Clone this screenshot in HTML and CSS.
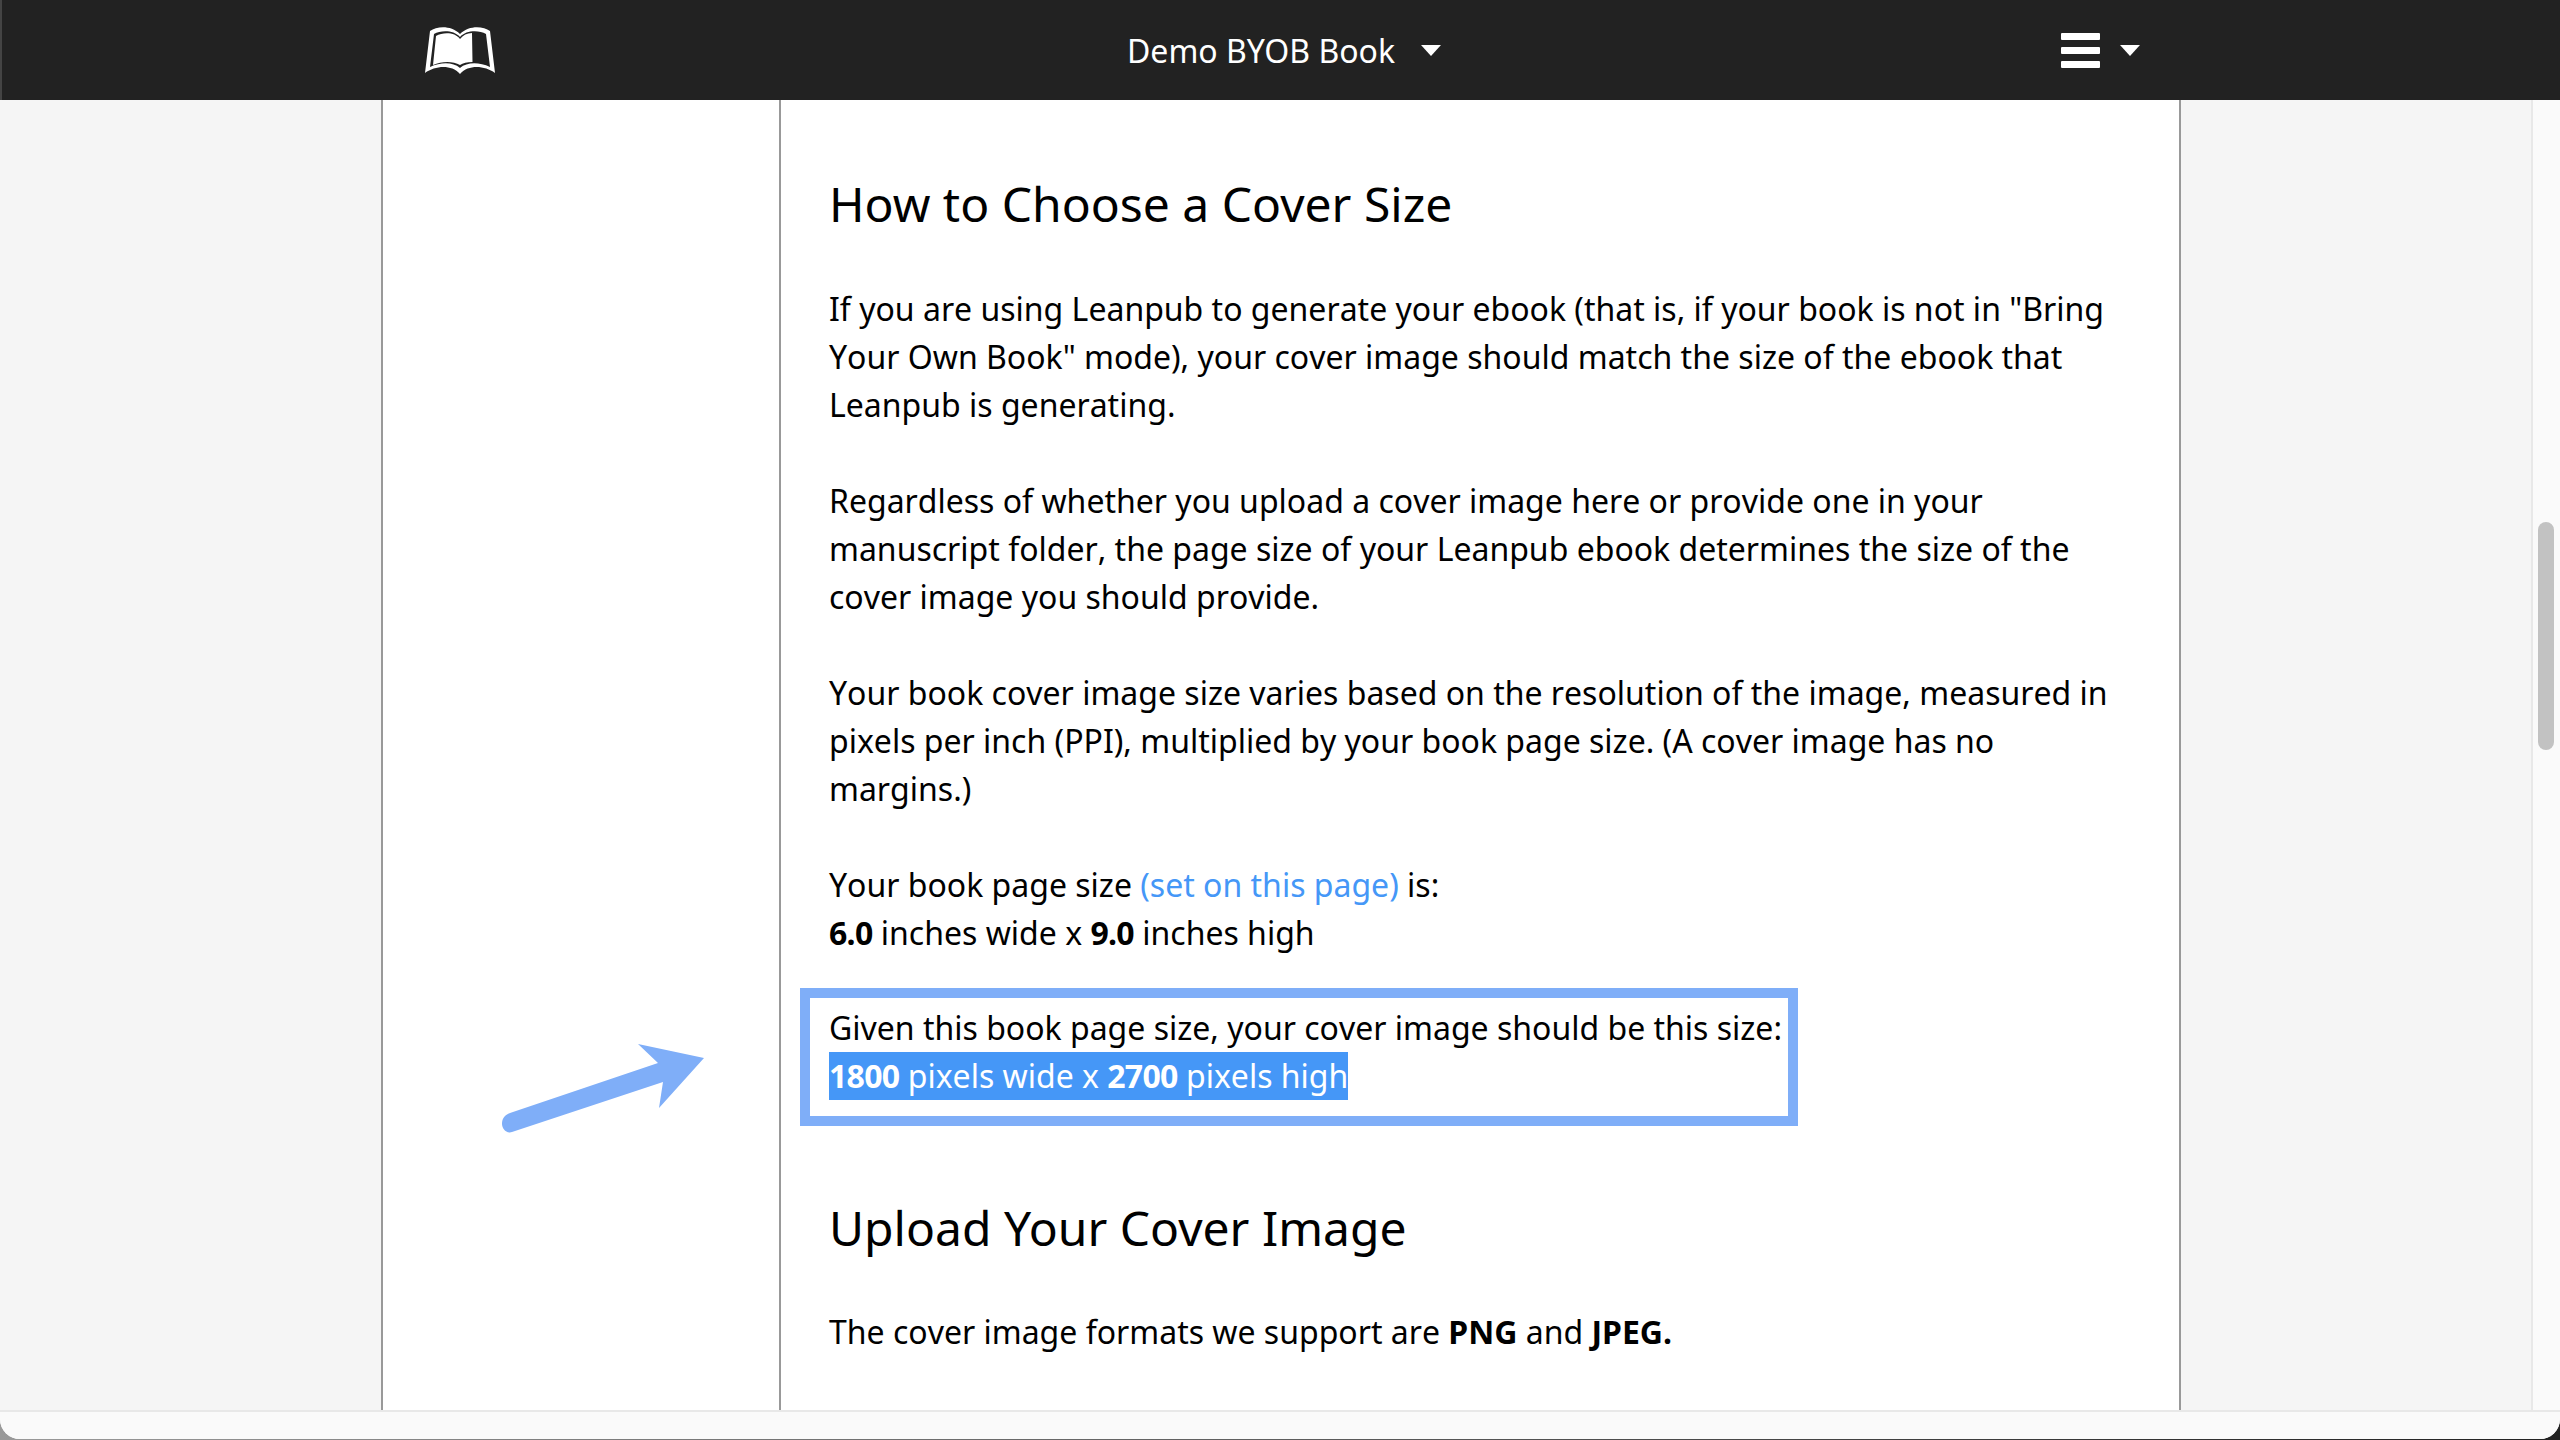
FILE: index.html
```html
<!DOCTYPE html>
<html lang="en">
<head>
  <meta charset="UTF-8">
  <meta name="viewport" content="width=device-width, initial-scale=1.0">
  <title>Book Cover</title>
  <link rel="stylesheet" href="styles.css">
</head>
<body>
  <div class="window">
    <header class="topbar">
      <svg class="book-icon" width="70" height="48" viewBox="0 0 70 48">
        <path fill="#fff" d="M5 5C12 0 26-1 35 8C44-1 58 0 65 5L70 47C60 40 44 38 35 48C26 38 10 40 0 47Z"/>
        <path fill="#222" d="M9 8C16 4 29 4 35 11C41 4 54 4 61 8L65 41C54 36 42 36 35 42C28 36 16 36 5 41Z"/>
        <path fill="#fff" d="M11 10C18 6 30 6 35 13C38 9 42 7 47 7L47.5 36C42 36 38 37 35 39C28 35 17 35 8 39Z"/>
      </svg>
      <div class="book-title">
        <span>Demo BYOB Book</span>
        <span class="caret"></span>
      </div>
      <div class="menu">
        <span class="burger"><i></i><i></i><i></i></span>
        <span class="caret"></span>
      </div>
    </header>

    <div class="body-row">
      <div class="page">
        <div class="gutter-left"></div>
        <div class="sidebar"></div>
        <main class="content">
          <h2>How to Choose a Cover Size</h2>
          <p>If you are using Leanpub to generate your ebook (that is, if your book is not in "Bring Your Own Book" mode), your cover image should match the size of the ebook that Leanpub is generating.</p>
          <p>Regardless of whether you upload a cover image here or provide one in your manuscript folder, the page size of your Leanpub ebook determines the size of the cover image you should provide.</p>
          <p>Your book cover image size varies based on the resolution of the image, measured in pixels per inch (PPI), multiplied by your book page size. (A cover image has no margins.)</p>
          <p>Your book page size <a href="#">(set on this page)</a> is:<br><b class="num">6.0</b> inches wide x <b class="num">9.0</b> inches high</p>
          <div class="callout">
            Given this book page size, your cover image should be this size:<br>
            <span class="selected"><b class="num">1800</b> pixels wide x <b class="num">2700</b> pixels high</span>
          </div>
          <h2 class="second">Upload Your Cover Image</h2>
          <p>The cover image formats we support are <b>PNG</b> and <b>JPEG.</b></p>
        </main>
        <div class="gutter-right"></div>
      </div>
      <div class="scroll-track"><div class="scroll-thumb"></div></div>
      <svg class="arrow" width="210" height="92" viewBox="0 0 210 92">
        <path fill="#7faef8" d="M136 0L202 14L157 64L161 38L10 88C4 90 0 84 0 80C0 74 3 71 8 69L156 19Z"/>
      </svg>
    </div>

    <div class="bottom-track"></div>
  </div>
</body>
</html>
```

FILE: styles.css
```css
html, body {
  margin: 0;
  padding: 0;
  height: 100%;
  overflow: hidden;
}
body {
  background: linear-gradient(to right, #999, #222);
  font-family: 'Noto Sans', Arial, sans-serif;
  color: #000;
}
.window {
  display: flex;
  flex-direction: column;
  width: 2560px;
  height: 1439px;
  border-radius: 0 0 20px 20px;
  overflow: hidden;
  background: #fafafa;
}

/* top bar */
.topbar {
  display: flex;
  align-items: center;
  flex: none;
  height: 100px;
  box-sizing: border-box;
  padding: 0 420px 0 423px;
  border-left: 2px solid #444;
  background: #222;
  color: #fff;
}
.book-icon {
  flex: none;
}
.book-title {
  display: flex;
  align-items: center;
  gap: 26px;
  margin-left: 632px;
  font-size: 32px;
}
.menu {
  display: flex;
  align-items: center;
  gap: 20px;
  margin-left: auto;
}
.burger {
  display: flex;
  flex-direction: column;
  gap: 7px;
  width: 39px;
}
.burger i {
  display: block;
  height: 7px;
  border-radius: 1px;
  background: #fff;
}
.caret {
  width: 0;
  height: 0;
  border-left: 10px solid transparent;
  border-right: 10px solid transparent;
  border-top: 11px solid #fff;
}

/* page */
.body-row {
  position: relative;
  display: flex;
  flex: 1;
  min-height: 0;
}
.page {
  display: flex;
  flex: 1;
  min-width: 0;
  background: #f5f5f5;
}
.gutter-left {
  flex: none;
  width: 381px;
}
.sidebar {
  flex: none;
  width: 396px;
  border-left: 2px solid #999;
  background: #fff;
}
.content {
  flex: none;
  width: 1290px;
  padding: 0 60px 0 48px;
  border-left: 2px solid #999;
  border-right: 2px solid #999;
  background: #fff;
  overflow: hidden;
}
.content h2 {
  margin: 76px 0 53px;
  font-size: 48px;
  font-weight: 400;
  line-height: 56px;
}
.content h2.second {
  margin-top: 74px;
  margin-bottom: 52px;
}
.content p {
  margin: 0 0 48px;
  font-size: 32px;
  line-height: 48px;
  font-kerning: none;
}
.content a {
  color: #4597f7;
  text-decoration: none;
}
.content b {
  font-weight: 700;
}
.content b.num {
  letter-spacing: -0.7px;
}
.callout {
  width: fit-content;
  margin: -17px 0 0 -29px;
  padding: 6px 6px 16px 19px;
  border: 10px solid #7faef8;
  font-size: 32px;
  line-height: 48px;
  font-kerning: none;
  white-space: nowrap;
}
.selected {
  display: inline-block;
  background: #4597f7;
  color: #fff;
}
.gutter-right {
  flex: 1;
}

/* scrollbars */
.scroll-track {
  flex: none;
  width: 27px;
  padding-top: 422px;
  border-left: 2px solid #e8e8e8;
  background: #fafafa;
}
.scroll-thumb {
  width: 16px;
  height: 228px;
  margin-left: 5px;
  border-radius: 8px;
  background: #c2c2c2;
}
.bottom-track {
  flex: none;
  height: 27px;
  border-top: 2px solid #e8e8e8;
  background: #fafafa;
}

/* annotation drawn over the page */
.arrow {
  position: absolute;
  left: 502px;
  top: 944px;
}
```
